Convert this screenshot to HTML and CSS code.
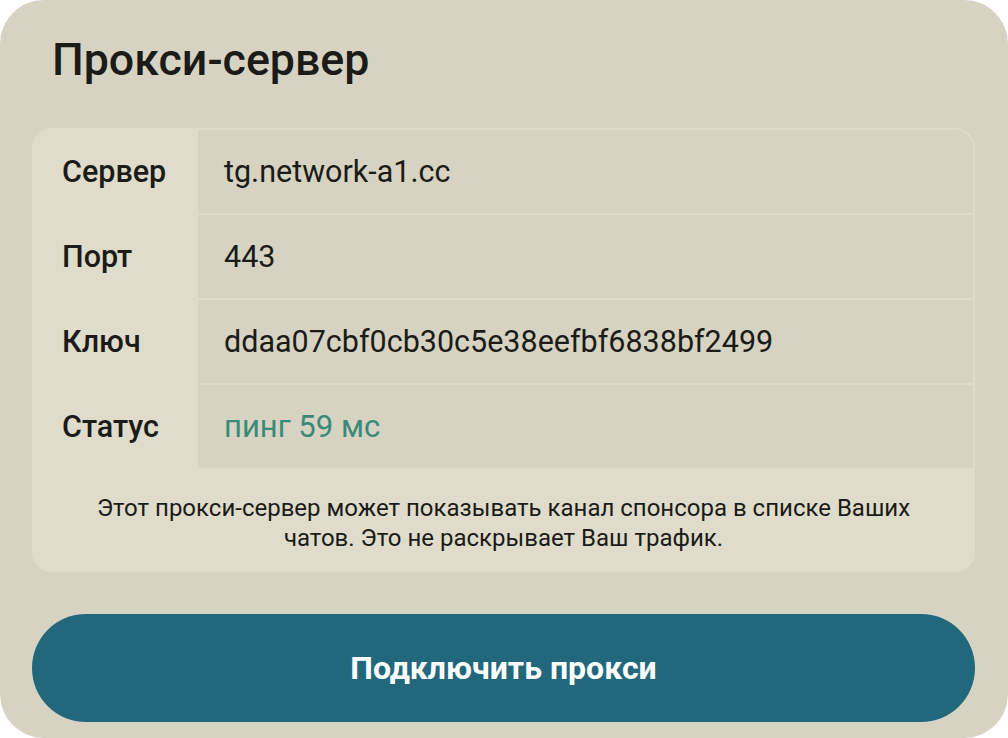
FILE: index.html
```html
<!DOCTYPE html>
<html lang="ru">
<head>
<meta charset="utf-8">
<link rel="stylesheet" href="styles.css">
</head>
<body>
<div class="panel">
  <h1 class="title">Прокси-сервер</h1>
  <div class="card">
    <div class="table">
      <div class="label">Сервер</div><div class="value">tg.network-a1.cc</div>
      <div class="label">Порт</div><div class="value">443</div>
      <div class="label">Ключ</div><div class="value">ddaa07cbf0cb30c5e38eefbf6838bf2499</div>
      <div class="label">Статус</div><div class="value status">пинг 59 мс</div>
    </div>
    <p class="note">Этот прокси-сервер может показывать канал спонсора в списке Ваших<br>чатов. Это не раскрывает Ваш трафик.</p>
  </div>
  <button class="connect">Подключить прокси</button>
</div>
</body>
</html>
```
FILE: styles.css
```css
html, body {
  margin: 0;
  padding: 0;
  background: #ffffff;
}
body {
  width: 1008px;
  height: 738px;
  overflow: hidden;
  font-family: Roboto, "Liberation Sans", sans-serif;
}
.panel {
  box-sizing: border-box;
  width: 1008px;
  height: 738px;
  background: #d6d3c2;
  border-radius: 44px;
  padding: 32px 33px 0 32px;
  display: flex;
  flex-direction: column;
}
.title {
  margin: 0 0 0 20px;
  font-size: 44.7px;
  font-weight: 500;
  color: #1b1b17;
  line-height: 56px;
  height: 96px;
}
.card {
  background: #dfdccc;
  border: 2px solid #dfdccc;
  border-radius: 20px;
  overflow: hidden;
}
.table {
  display: grid;
  grid-template-columns: 164px 1fr;
  row-gap: 2px;
}
.label {
  height: 83px;
  display: flex;
  align-items: center;
  padding-left: 28px;
  font-size: 30.5px;
  font-weight: 500;
  color: #1b1b17;
}
.value {
  height: 83px;
  display: flex;
  align-items: center;
  padding-left: 26px;
  background: #d6d3c2;
  font-size: 30.5px;
  color: #1b1b17;
}
.status {
  color: #3a8a78;
  font-size: 31px;
}
.note {
  margin: 0;
  padding: 25px 0 17px;
  text-align: center;
  font-size: 24px;
  line-height: 30px;
  color: #1b1b17;
}
.connect {
  margin-top: 42px;
  height: 108px;
  border: none;
  border-radius: 54px;
  background: #22687c;
  color: #ffffff;
  font-family: Roboto, "Liberation Sans", sans-serif;
  font-size: 32px;
  font-weight: 700;
}
```
